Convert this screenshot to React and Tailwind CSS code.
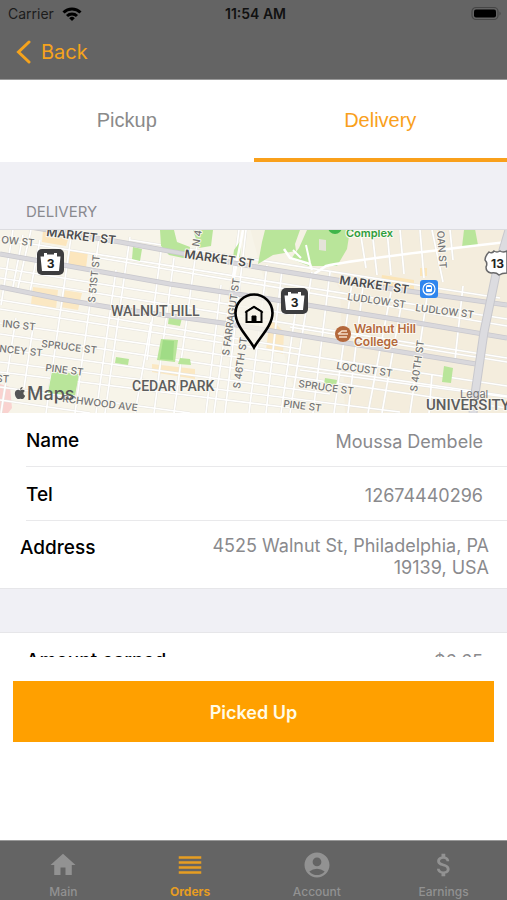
import { MdAccountCircle, MdAttachMoney, MdHome, MdReorder } from 'react-icons/md';
import { FaApple } from 'react-icons/fa';

const navItems = [
    { label: 'Main', icon: MdHome },
    { label: 'Orders', icon: MdReorder, active: true },
    { label: 'Account', icon: MdAccountCircle },
    { label: 'Earnings', icon: MdAttachMoney },
];

const blocks = [
    { d: 'M296 -2H507V183H310Z', fill: '#f4eddd' },
    { d: 'M250 -2H310L340 60L345 183H300Z', fill: '#f5f1e4' },
    { d: 'M43 0L69 6L66 16L42 12Z', fill: '#fce6bd' },
    { d: 'M68 19L88 22L86 38L66 35Z', fill: '#fce6bd' },
    { d: 'M33 57L58 60L56 79L31 74Z', fill: '#fbe8c3' },
    { d: 'M63 60L82 63L78 80L60 77Z', fill: '#fbe8c3' },
    { d: 'M270 88L284 102L283 124L266 120Z', fill: '#fbe8c3' },
    { d: 'M152 134L195 139V149L152 142Z', fill: '#fbe8c3' },
    { d: 'M382 45L414 50V62L380 57Z', fill: '#fbe5b8' },
    { d: 'M420 38H427V46H420Z', fill: '#fbe5b8' },
    { d: 'M0 154L10 157L12 178L8 183H0Z', fill: '#f9d3d0' },
];

const parks = [
    'M160 0H174L177 12L190 17L188 29L169 25L161 16Z',
    'M193 0H213L211 16L199 18Z',
    'M133 17L142 19L140 31L132 29Z',
    'M265 0H300L295 14L296 21L273 25L258 34L262 12Z',
    'M307 0H350L347 19L337 36L309 36L291 29L299 18Z',
    'M234 20L241 10L240 28L233 28Z',
    'M464 0L475 -1L478 15L462 17Z',
    'M169 86L182 88L180 96L168 94Z',
    'M161 109L178 110L175 132L157 130Z',
    'M180 128L190 129L191 135L178 134Z',
    'M116 127L129 129L128 135L115 133Z',
    'M52 141L79 144L75 166L48 163Z',
    'M325 148L337 150L336 156L324 154Z',
    'M444 136L453 138L451 153L442 152Z',
];

// Slightly tilted street grid: [x1, y1, x2, y2]
const streets = [
    [0, 9, 507, 89], [0, 38, 290, 84], [0, 48, 507, 128], [0, 70, 300, 119],
    [0, 79, 507, 156], [0, 93, 507, 166], [0, 104, 507, 178], [0, 119, 330, 164],
    [0, 132, 400, 182], [0, 142, 300, 179], [0, 157, 190, 183], [130, 10, 500, 68],
    [100, 28, 507, 96], [290, 97, 507, 132], [300, 140, 507, 167], [0, 170, 90, 183],
    [72, 0, 46, 183], [40, 10, 30, 62], [31, 0, 17, 62], [23, 5, 12, 62], [13, 0, 1, 75],
    [16, 88, 1, 183], [34, 91, 24, 158], [99, 8, 75, 183], [116, 40, 96, 183],
    [130, 7, 105, 183], [151, 92, 135, 183], [162, 14, 147, 130], [174, 28, 154, 183],
    [199, 0, 174, 183], [221, 55, 206, 183], [239, 0, 214, 183], [246, 0, 225, 183],
    [267, 35, 249, 183], [282, 40, 266, 183], [298, 64, 281, 183], [312, 42, 290, 183],
    [330, 42, 313, 183], [352, 52, 334, 183], [363, 56, 348, 183], [391, 62, 368, 183],
    [401, 76, 382, 183], [428, 60, 410, 183], [463, 56, 455, 130], [432, 145, 429, 183],
    [360, 0, 366, 38], [372, 0, 377, 45], [387, 0, 391, 45], [400, 0, 404, 44],
    [420, 0, 424, 48], [432, 0, 443, 52], [450, 0, 453, 30],
];

const mainRoads = [
    'M0 -8L120 12L250 36L380 57L507 75',
    'M0 24L63 35L170 54L270 69L400 90L507 108',
    'M0 57L60 69L120 79L230 94L340 112L476 134',
];

const roadLabels = [
    { text: 'MARKET ST', x: 46, y: 6, r: 7, bold: true },
    { text: 'MARKET ST', x: 184, y: 28, r: 8, bold: true },
    { text: 'MARKET ST', x: 339, y: 54, r: 8, bold: true },
    { text: 'OW ST', x: 1, y: 13, r: 6 },
    { text: 'ING ST', x: 2, y: 97, r: 6 },
    { text: 'SPRUCE ST', x: 41, y: 117, r: 7 },
    { text: 'NCEY ST', x: -1, y: 122, r: 6 },
    { text: 'PINE ST', x: 45, y: 141, r: 7 },
    { text: 'ST', x: -4, y: 152, r: 3 },
    { text: 'RCHWOOD AVE', x: 62, y: 172, r: 7 },
    { text: 'LUDLOW ST', x: 347, y: 70, r: 8 },
    { text: 'LUDLOW ST', x: 415, y: 81, r: 7 },
    { text: 'LOCUST ST', x: 336, y: 139, r: 8 },
    { text: 'SPRUCE ST', x: 298, y: 157, r: 8 },
    { text: 'PINE ST', x: 283, y: 177, r: 7 },
    { text: 'S 51ST ST', x: 95, y: 73, r: -84 },
    { text: 'S FARRAGUT ST', x: 229, y: 126, r: -82 },
    { text: 'S 46TH ST', x: 240, y: 159, r: -82 },
    { text: 'S 40TH ST', x: 417, y: 162, r: -82 },
    { text: 'N 4', x: 199, y: 17, r: -80 },
    { text: 'OAN ST', x: 437, y: 1, r: 86 },
];

function WifiIcon() {
    return (
        <svg className="h-4 w-5" viewBox="0 0 20 16" fill="none" stroke="#000" strokeWidth="3">
            <path d="M1.5 6.5a12.2 12.2 0 0 1 17 0" />
            <path d="M5 10a7.2 7.2 0 0 1 10 0" />
            <path d="M10 15L7.2 12.2a4 4 0 0 1 5.6 0Z" fill="#000" stroke="none" />
        </svg>
    );
}

function BatteryIcon() {
    return (
        <svg className="h-4 w-8" viewBox="0 0 32 16">
            <rect x="1" y="1.500" width="26" height="12" rx="4" fill="none" stroke="#464646" strokeWidth="1.200" />
            <rect x="3" y="3.500" width="22" height="8" rx="2" fill="#000" />
            <path d="M28.500 5.500a2.400 2.400 0 0 1 0 4Z" fill="#464646" />
        </svg>
    );
}

function KeystoneShield({ x, y }) {
    return (
        <g transform={`translate(${x} ${y})`}>
            <rect width="27" height="26" rx="5" fill="#3d3d3f" />
            <path d="M7 4h3v1.500h7V4h3v3.500h3.500l-1.500 14.500h-17l-1.500-14.500h3.500Z" fill="#fff" />
            <text x="13.500" y="19" textAnchor="middle" fontSize="12" fontWeight="700" fill="#222">3</text>
        </g>
    );
}

function DeliveryMap() {
    return (
        <svg
            className="block w-full font-['Inter','Liberation_Sans',sans-serif]"
            viewBox="0 0 507 183"
            role="img"
            aria-label="Delivery location map"
        >
            <rect width="507" height="183" fill="#f7f4e9" />
            {blocks.map((b) => <path key={b.d} d={b.d} fill={b.fill} />)}

            <g stroke="#e6e4de" strokeWidth="2.600">
                {streets.map(([x1, y1, x2, y2], i) => <line key={i} x1={x1} y1={y1} x2={x2} y2={y2} />)}
            </g>
            <g stroke="#fff" strokeWidth="1.700">
                {streets.map(([x1, y1, x2, y2], i) => <line key={i} x1={x1} y1={y1} x2={x2} y2={y2} />)}
            </g>
            {parks.map((d) => <path key={d} d={d} fill="#b9e59a" />)}
            <path d="M163 110L174 111L173 130L160 129Z" fill="#a0dc86" />
            <path d="M319 9L326 10V21L319 20Z" fill="#e5e3d9" />

            <g fill="none" stroke="#fff" strokeWidth="2.500">
                <path d="M314 44L326 36Q350 30 507 12" />
                <path d="M284 19L290 28L310 34L312 40" />
                <path d="M293 20L301 28M306 15L310 33" strokeWidth="2" />
                <path d="M243 0L233 52" />
            </g>
            {mainRoads.map((d) => <path key={d} d={d} fill="none" stroke="#c9c8cd" strokeWidth="5" />)}
            {mainRoads.map((d) => <path key={d} d={d} fill="none" stroke="#d9d8dc" strokeWidth="3.500" />)}
            <path d="M509 0L496 44L484 102L475 164L473 183" fill="none" stroke="#c8c8cd" strokeWidth="9" />
            <path d="M509 0L496 44L484 102L475 164L473 183" fill="none" stroke="#dcdce0" strokeWidth="7" />

            <g paintOrder="stroke" stroke="#faf8f0" strokeWidth="2" strokeLinejoin="round">
                {roadLabels.map(({ text, x, y, r, bold }) => (
                    <text
                        key={`${text}-${x}`}
                        transform={`translate(${x} ${y}) rotate(${r})`}
                        fontSize={bold ? 12 : 10}
                        fontWeight={bold ? 600 : 500}
                        fill={bold ? '#4c4c4e' : '#747474'}
                    >
                        {text}
                    </text>
                ))}
                <g className="font-['Roboto',sans-serif]" fontSize="14" fontWeight="500" fill="#5d5d5d">
                    <text x="111" y="86">WALNUT HILL</text>
                    <text x="132" y="161">CEDAR PARK</text>
                    <text x="426" y="180" fontSize="15">UNIVERSITY</text>
                </g>
                <g fontSize="12" fontWeight="600">
                    <text x="346" y="7" fontSize="11" fill="#2f9e3c">Complex</text>
                    <text x="354" y="103" fill="#b4683c">Walnut Hill</text>
                    <text x="354" y="116" fill="#b4683c">College</text>
                </g>
            </g>
            <text x="460" y="168" fontSize="11" fill="#77777a">Legal</text>

            <circle cx="335" cy="-3" r="7" fill="#3fb54a" />
            <circle cx="343" cy="104" r="8" fill="#b4683c" />
            <path d="M338 104l4-3h5M338 104h10M339 107h8" stroke="#f6ddc8" strokeWidth="1.500" fill="none" />

            <KeystoneShield x={37} y={19} />
            <KeystoneShield x={281} y={58} />
            <path
                d="M489 22q3 2 5-1q3 2 6 0q3 2 7 0v22q-5 0-8 2q-3-3-8-2q-5-1-5-6q2-4-1-7q0-4 4-8Z"
                fill="#fff"
                stroke="#68686a"
                strokeWidth="1.500"
            />
            <text x="491" y="38" fontSize="12" fontWeight="700" fill="#222">13</text>

            <rect x="420" y="50" width="18" height="18" rx="3" fill="#2f86ee" />
            <circle cx="429" cy="59" r="6" fill="none" stroke="#fff" strokeWidth="1.200" />
            <rect x="426" y="55" width="6" height="7" rx="1.500" fill="#fff" />
            <path d="M427 57h4v2h-4Z" fill="#2f86ee" />
            <path d="M426 64h6" stroke="#fff" strokeWidth="1.200" />

            <path
                d="M254 117.500C249 108 235.500 96 235.500 83A18.500 18.500 0 0 1 272.500 83C272.500 96 259 108 254 117.500Z"
                fill="#f7f4e9"
                fillOpacity="0.750"
                stroke="#000"
                strokeWidth="2.600"
            />
            <path d="M246.500 92V81.500L254 77L261.500 81.500V92Z" fill="none" stroke="#000" strokeWidth="2" />
            <path d="M245 82.500L254 76.500L263 82.500" fill="none" stroke="#000" strokeWidth="1.200" />
            <path d="M252 92V86h4v6Z" fill="#000" stroke="#000" />

            <FaApple x="13" y="156" size="14" color="#555" />
            <text x="27" y="170" fontSize="18" fontWeight="500" fill="#58595a">Maps</text>
        </svg>
    );
}

function DetailRow({ label, value }) {
    return (
        <div className="ml-[26px] flex h-[54px] items-center justify-between border-b border-[#e9e9eb] pt-1 pr-6">
            <dt className="text-[19px] font-medium text-black">{label}</dt>
            <dd className="text-[18px] text-[#8a8a8d]">{value}</dd>
        </div>
    );
}

export default function App() {
    return (
        <div className="flex min-h-screen flex-col bg-white font-['Inter','Liberation_Sans',sans-serif]">
            <header className="h-20 border-b border-[#999] bg-[#646464]">
                <div className="grid h-7 grid-cols-3 items-center pr-1 pl-2">
                    <div className="flex items-center gap-2 text-sm text-[#1c1c1c]">
                        Carrier
                        <WifiIcon />
                    </div>
                    <div className="text-center text-sm font-semibold text-[#111]">11:54 AM</div>
                    <div className="flex justify-end"><BatteryIcon /></div>
                </div>
                <button type="button" className="flex h-12 items-center gap-2 pl-4 text-xl text-[#f5a31c]">
                    <svg className="h-6 w-[17px]" viewBox="0 0 17 24" fill="none" stroke="currentColor" strokeWidth="3">
                        <path d="M13 2L2.500 12L13 22" strokeLinecap="round" />
                    </svg>
                    Back
                </button>
            </header>

            <main className="flex flex-1 flex-col">
                <div role="tablist" className="grid h-[82px] grid-cols-2 font-['Liberation_Sans',sans-serif] text-xl">
                    <button type="button" role="tab" aria-selected="false" className="border-b-4 border-transparent pt-0.5 text-[#8a8a8a]">
                        Pickup
                    </button>
                    <button type="button" role="tab" aria-selected="true" className="border-b-4 border-[#f9a01b] pt-0.5 text-[#f9a01b]">
                        Delivery
                    </button>
                </div>

                <section>
                    <h2 className="flex h-[68px] items-end border-b border-[#dcdce0] bg-[#f0f0f5] pb-1.5 pl-[26px] text-[15px] text-[#8a8a8f]">
                        DELIVERY
                    </h2>
                    <DeliveryMap />
                    <dl>
                        <DetailRow label="Name" value="Moussa Dembele" />
                        <DetailRow label="Tel" value="12674440296" />
                        <div className="flex h-[67px] items-center justify-between pr-[18px] pl-5">
                            <dt className="pb-3 text-[19px] font-medium text-black">Address</dt>
                            <dd className="w-72 pt-1 text-right text-[18px] leading-[22px] text-[#8a8a8d]">
                                4525 Walnut St, Philadelphia, PA 19139, USA
                            </dd>
                        </div>
                    </dl>
                </section>

                <div className="h-[45px] border-y border-[#e6e6e9] bg-[#f0f0f5]" />
                <dl className="h-6 overflow-hidden">
                    <DetailRow label="Amount earned" value="$6.65" />
                </dl>

                <div className="px-[13px] pt-6 pb-8">
                    <button type="button" className="h-[61px] w-full bg-[#ffa000] pt-0.5 text-[18px] font-semibold text-[#fffbe6]">
                        Picked Up
                    </button>
                </div>
            </main>

            <nav className="grid h-[60px] grid-cols-4 border-t border-[#999] bg-[#646464]">
                {navItems.map(({ label, icon: Icon, active }) => (
                    <a
                        key={label}
                        href="#"
                        className={`flex flex-col items-center justify-end gap-1 text-xs ${active ? 'font-bold text-[#e69d22]' : 'font-medium text-[#929292]'}`}
                    >
                        <Icon size={30} />
                        {label}
                    </a>
                ))}
            </nav>
        </div>
    );
}
